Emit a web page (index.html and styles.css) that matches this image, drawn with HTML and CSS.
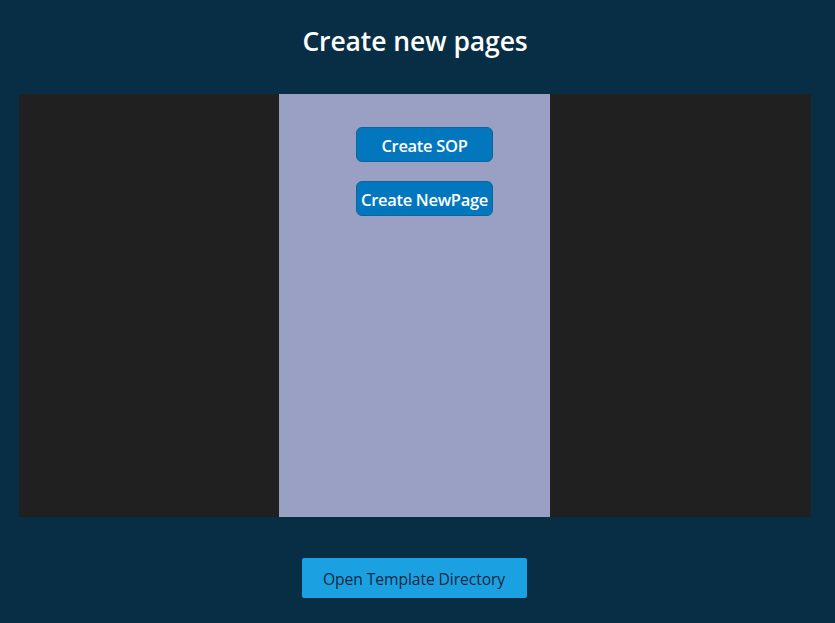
FILE: index.html
```html
<!DOCTYPE html>
<html>
<head>
<meta charset="utf-8">
<link rel="stylesheet" href="styles.css">
</head>
<body>
<div class="page">
  <h1 class="title">Create new pages</h1>
  <div class="panel">
    <div class="side"></div>
    <div class="middle">
      <button class="create-btn">Create SOP</button>
      <button class="create-btn">Create NewPage</button>
    </div>
    <div class="side"></div>
  </div>
  <div class="footer">
    <button class="open-btn">Open Template Directory</button>
  </div>
</div>
</body>
</html>
```
FILE: styles.css
```css
html, body {
  margin: 0;
  padding: 0;
  background: #072e44;
  height: 100%;
}
.page {
  padding: 0 24px 0 19px;
  font-family: "Open Sans", "Noto Sans", sans-serif;
}
.title {
  margin: 0;
  height: 94px;
  box-sizing: border-box;
  padding-top: 22px;
  text-align: center;
  color: #ffffff;
  font-size: 26.5px;
  font-weight: 600;
  line-height: 38px;
  letter-spacing: -0.1px;
}
.panel {
  display: grid;
  grid-template-columns: 260px 271px 1fr;
  height: 423px;
  background: #202020;
}
.middle {
  background: #9aa0c4;
  display: flex;
  flex-direction: column;
  align-items: center;
  padding-top: 33px;
  gap: 19px;
  padding-left: 20px;
  box-sizing: border-box;
}
.create-btn {
  width: 137px;
  height: 35px;
  box-sizing: border-box;
  background: #0277bd;
  border: 1px solid #0b649a;
  border-radius: 6px;
  color: #ffffff;
  font-family: "Open Sans", "Noto Sans", sans-serif;
  font-size: 16.5px;
  font-weight: 600;
  padding: 2px 0 0 0;
  white-space: nowrap;
  letter-spacing: -0.3px;
}
.footer {
  display: flex;
  justify-content: center;
  padding-top: 41px;
  padding-right: 2px;
}
.open-btn {
  width: 225px;
  height: 40px;
  background: #1ba1e2;
  border: none;
  border-radius: 2px;
  color: #14283e;
  font-family: "Open Sans", "Noto Sans", sans-serif;
  font-size: 15.7px;
  padding: 1px 0 0 0;
  letter-spacing: -0.1px;
}
```
